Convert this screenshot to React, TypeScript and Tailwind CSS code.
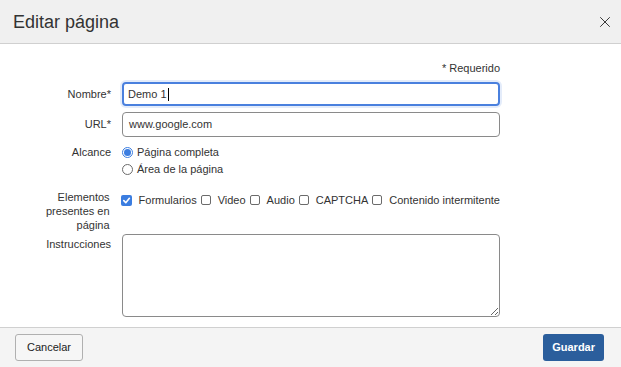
import React from 'react';
import { X } from 'lucide-react';

const font = { fontFamily: '"Liberation Sans", Arial, sans-serif' };

const Check = ({ checked }: { checked?: boolean }) =>
  checked ? (
    <span className="flex h-[11px] w-[11px] shrink-0 items-center justify-center rounded-[2px] bg-[#3b7de0]">
      <svg width="9" height="9" viewBox="0 0 10 10" fill="none">
        <path d="M2 5.2 L4.2 7.4 L8.2 2.6" stroke="white" strokeWidth="1.8" strokeLinecap="round" strokeLinejoin="round" />
      </svg>
    </span>
  ) : (
    <span className="h-[10px] w-[10px] shrink-0 rounded-[2px] border border-[#6b6b6b] bg-white" />
  );

const Radio = ({ checked }: { checked?: boolean }) =>
  checked ? (
    <span className="flex h-[11px] w-[11px] shrink-0 items-center justify-center rounded-full border border-[#3b7de0] bg-white">
      <span className="h-[7px] w-[7px] rounded-full bg-[#3b7de0]" />
    </span>
  ) : (
    <span className="h-[11px] w-[11px] shrink-0 rounded-full border border-[#6b6b6b] bg-white" />
  );

const elementos = [
  { label: 'Formularios', checked: true },
  { label: 'Video' },
  { label: 'Audio' },
  { label: 'CAPTCHA' },
  { label: 'Contenido intermitente' },
];

export default function App() {
  return (
    <div className="flex h-[367px] w-[621px] flex-col bg-white text-[11px] text-[#333]" style={font}>
      {/* header */}
      <div className="flex h-[44px] shrink-0 items-center justify-between border-b border-[#d0d0d0] bg-[#f0f0f0] pl-[13px] pr-[7px]">
        <h1 className="text-[18px] leading-none text-[#333]">Editar página</h1>
        <X size={18} strokeWidth={1.3} className="text-[#333]" />
      </div>

      {/* form */}
      <div className="flex flex-1 flex-col pl-[11px] pr-[121px]">
        <div className="mt-[17px] text-right leading-[14px]">* Requerido</div>

        <div className="mt-[7px] flex items-center gap-[11px]">
          <label className="w-[100px] text-right">Nombre*</label>
          <div className="flex h-[24px] flex-1 items-center rounded-[4px] border-2 border-[#4a80de] px-[4px] shadow-[0_0_0_2px_rgba(74,128,222,0.15)]">
            <span>Demo 1</span>
            <span className="ml-[1px] h-[13px] w-[1px] bg-black" />
          </div>
        </div>

        <div className="mt-[6px] flex items-center gap-[11px]">
          <label className="w-[100px] text-right">URL*</label>
          <div className="flex h-[25px] flex-1 items-center rounded-[4px] border border-[#8a8a8a] px-[6px]">
            www.google.com
          </div>
        </div>

        <div className="mt-[7px] flex gap-[11px]">
          <label className="w-[100px] text-right leading-[17px]">Alcance</label>
          <div className="flex flex-col">
            <div className="flex h-[17px] items-center gap-[4px]">
              <Radio checked />
              <span>Página completa</span>
            </div>
            <div className="flex h-[17px] items-center gap-[4px]">
              <Radio />
              <span>Área de la página</span>
            </div>
          </div>
        </div>

        <div className="mt-[12px] flex gap-[11px]">
          <label className="w-[100px] pl-[6px] text-right leading-[14px]">Elementos presentes en página</label>
          <div className="mt-[3px] flex h-[14px] items-center gap-[4px] whitespace-nowrap">
            {elementos.map((e) => (
              <div key={e.label} className="flex items-center gap-[7px]">
                <Check checked={e.checked} />
                <span>{e.label}</span>
              </div>
            ))}
          </div>
        </div>

        <div className="mt-[2px] flex gap-[11px]">
          <label className="w-[100px] pt-[3px] text-right leading-[14px]">Instrucciones</label>
          <textarea className="h-[83px] flex-1 rounded-[4px] border border-[#8a8a8a] outline-none" />
        </div>
      </div>

      {/* footer */}
      <div className="flex h-[40px] shrink-0 items-center justify-between border-t border-[#d0d0d0] bg-[#f4f4f4] pl-[15px] pr-[17px]">
        <button className="h-[27px] rounded-[3px] border border-[#b0b0b0] bg-[#f6f6f6] px-[11px] text-[11px] text-[#222]">
          Cancelar
        </button>
        <button className="h-[27px] rounded-[3px] bg-[#2b5e9c] px-[9px] text-[11px] font-bold text-white">
          Guardar
        </button>
      </div>
    </div>
  );
}
